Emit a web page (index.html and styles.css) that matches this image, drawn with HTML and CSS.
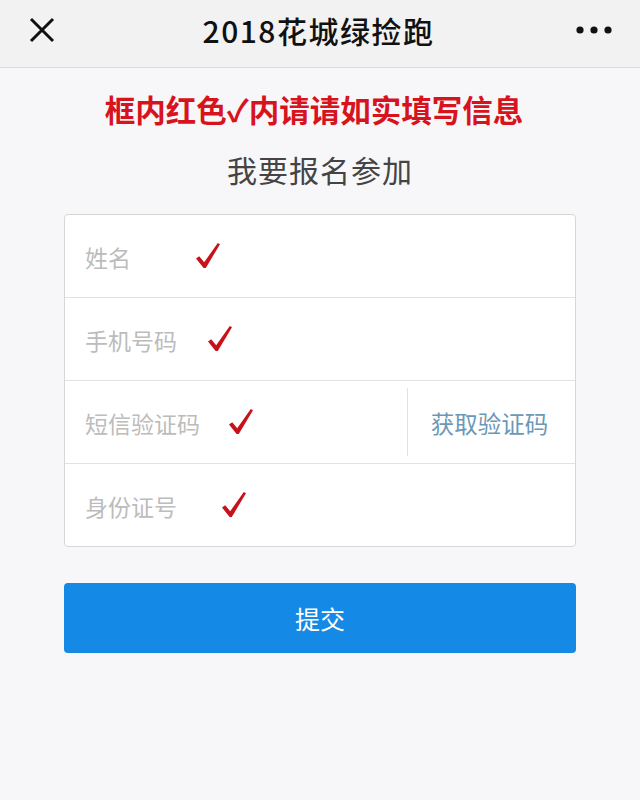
FILE: index.html
```html
<!DOCTYPE html>
<html lang="zh-CN">
<head>
    <meta charset="UTF-8">
    <meta name="viewport" content="width=device-width, initial-scale=1.0">
    <title>2018花城绿捡跑</title>
    <link rel="stylesheet" href="styles.css">
</head>
<body>
    <header class="topbar">
        <svg class="close" width="26" height="26" viewBox="0 0 26 26">
            <path d="M2 2 L24 24 M24 2 L2 24" stroke="#111" stroke-width="3" fill="none"/>
        </svg>
        <div class="title">2018花城绿捡跑</div>
        <svg class="more" width="36" height="10" viewBox="0 0 36 10">
            <circle cx="4" cy="5" r="3.6" fill="#111"/>
            <circle cx="18" cy="5" r="3.6" fill="#111"/>
            <circle cx="32" cy="5" r="3.6" fill="#111"/>
        </svg>
    </header>

    <main class="page">
        <p class="notice">框内红色✓内请请如实填写信息</p>
        <h2 class="heading">我要报名参加</h2>

        <!-- signup form -->
        <form class="signup" onsubmit="event.preventDefault()">
            <div class="row">
                <span class="label">姓名</span>
                <svg class="mark mark-name" width="24" height="25" viewBox="0 0 24 25"><path d="M0 15.5 L3.2 13.3 L8.2 19.2 L21.8 0 L24 1.2 L9.8 25 L7.6 25 Z" fill="#c8121b"/></svg>
            </div>
            <div class="row">
                <span class="label">手机号码</span>
                <svg class="mark mark-phone" width="24" height="25" viewBox="0 0 24 25"><path d="M0 15.5 L3.2 13.3 L8.2 19.2 L21.8 0 L24 1.2 L9.8 25 L7.6 25 Z" fill="#c8121b"/></svg>
            </div>
            <div class="row">
                <span class="label">短信验证码</span>
                <svg class="mark mark-code" width="24" height="25" viewBox="0 0 24 25"><path d="M0 15.5 L3.2 13.3 L8.2 19.2 L21.8 0 L24 1.2 L9.8 25 L7.6 25 Z" fill="#c8121b"/></svg>
                <button type="button" class="get-code">获取验证码</button>
            </div>
            <div class="row">
                <span class="label">身份证号</span>
                <svg class="mark mark-id" width="24" height="25" viewBox="0 0 24 25"><path d="M0 15.5 L3.2 13.3 L8.2 19.2 L21.8 0 L24 1.2 L9.8 25 L7.6 25 Z" fill="#c8121b"/></svg>
            </div>
        </form>

        <button type="submit" class="submit">提交</button>
    </main>
</body>
</html>
```

FILE: styles.css
```css
body {
    margin: 0;
    padding: 0;
    background: #f7f7f9;
    font-family: "Noto Sans CJK SC", "Noto Sans", sans-serif;
}
.topbar {
    height: 60px;
    display: flex;
    align-items: center;
    justify-content: space-between;
    padding: 0 28px 7px 29px;
    background: #f2f2f2;
    border-bottom: 1px solid #dcdcdc;
}
.topbar .close {
    display: block;
}
.topbar .title {
    font-size: 30px;
    font-weight: 500;
    color: #111;
    letter-spacing: 1.5px;
    margin-left: 6px;
}
.topbar .more {
    display: block;
}
.page {
    padding: 0 64px;
}
.notice {
    margin: 0;
    padding-top: 20px;
    padding-right: 12px;
    text-align: center;
    font-size: 30.5px;
    line-height: 42px;
    font-weight: 700;
    color: #d7131d;
}
.heading {
    margin: 0;
    padding-top: 18px;
    text-align: center;
    font-size: 30px;
    line-height: 42px;
    font-weight: 400;
    color: #444;
    letter-spacing: 1px;
}
.signup {
    margin-top: 24px;
    background: #fff;
    border: 1px solid #d6d6d6;
    border-radius: 4px;
    display: flex;
    flex-direction: column;
}
.row {
    height: 82px;
    display: flex;
    align-items: center;
    padding-left: 20px;
    border-bottom: 1px solid #e2e2e2;
}
.row:last-child {
    border-bottom: none;
}
.label {
    font-size: 23px;
    color: #bcbcbc;
    padding-top: 2px;
}
.mark {
    display: block;
    margin-bottom: 2px;
}
.mark-name {
    margin-left: 65px;
}
.mark-phone {
    margin-left: 31px;
}
.mark-code {
    margin-left: 29px;
}
.mark-id {
    margin-left: 45px;
}
.get-code {
    margin-left: auto;
    height: 68px;
    width: 168px;
    border: none;
    border-left: 1px solid #e2e2e2;
    background: none;
    font-family: inherit;
    font-size: 23.5px;
    color: #6c98b8;
    padding: 2px 4px 0 0;
}
.submit {
    display: block;
    width: 100%;
    height: 70px;
    margin-top: 36px;
    background: #1589e6;
    color: #fff;
    border: none;
    border-radius: 4px;
    font-family: inherit;
    font-size: 25px;
    cursor: pointer;
}
```
